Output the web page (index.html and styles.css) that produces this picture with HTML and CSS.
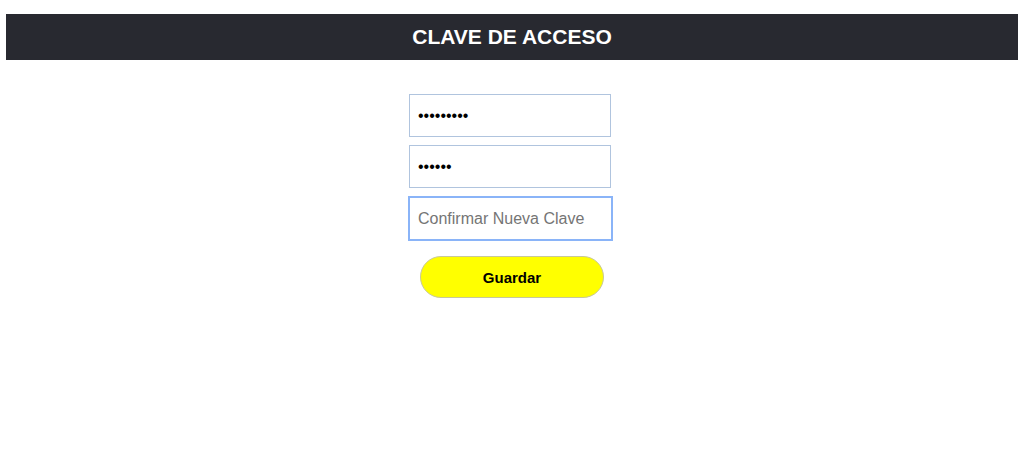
FILE: index.html
```html
<!DOCTYPE html>
<html lang="es">
<head>
<meta charset="utf-8">
<title>Clave de acceso</title>
<link rel="stylesheet" href="styles.css">
</head>
<body>
<header class="topbar"><h1 class="title">CLAVE DE ACCESO</h1></header>
<main class="form">
  <input class="field" type="password" value="123456789">
  <input class="field" type="password" value="123456">
  <input class="field field-focus" type="password" placeholder="Confirmar Nueva Clave">
  <button class="save" type="button">Guardar</button>
</main>
</body>
</html>
```
FILE: styles.css
```css
html, body { margin: 0; padding: 0; background: #fff; }
body { padding: 14px 6px 0; font-family: "Liberation Sans", Arial, sans-serif; }
.topbar {
  height: 46px;
  background: #282930;
  display: flex;
  align-items: center;
  justify-content: center;
}
.title {
  margin: 0;
  color: #fff;
  font-size: 21px;
  font-weight: bold;
}
.form {
  display: flex;
  flex-direction: column;
  align-items: center;
  padding-top: 34px;
}
.field {
  box-sizing: border-box;
  width: 202px;
  height: 43px;
  margin: 0 4px 8px 0;
  padding: 0 8px;
  border: 1px solid #b0c4de;
  font-family: "Liberation Sans", Arial, sans-serif;
  font-size: 16px;
  color: #000;
  outline: none;
}
.field-focus {
  width: 205px;
  height: 45px;
  border: 2px solid #8ab4f8;
  margin-right: 3px;
  margin-bottom: 15px;
}
.field-focus::placeholder { color: #757575; }
.save {
  box-sizing: border-box;
  width: 184px;
  height: 42px;
  border-radius: 21px;
  background: #ffff00;
  border: 1px solid #c8c89a;
  font-family: "Liberation Sans", Arial, sans-serif;
  font-size: 15px;
  font-weight: bold;
  color: #000;
}
```
